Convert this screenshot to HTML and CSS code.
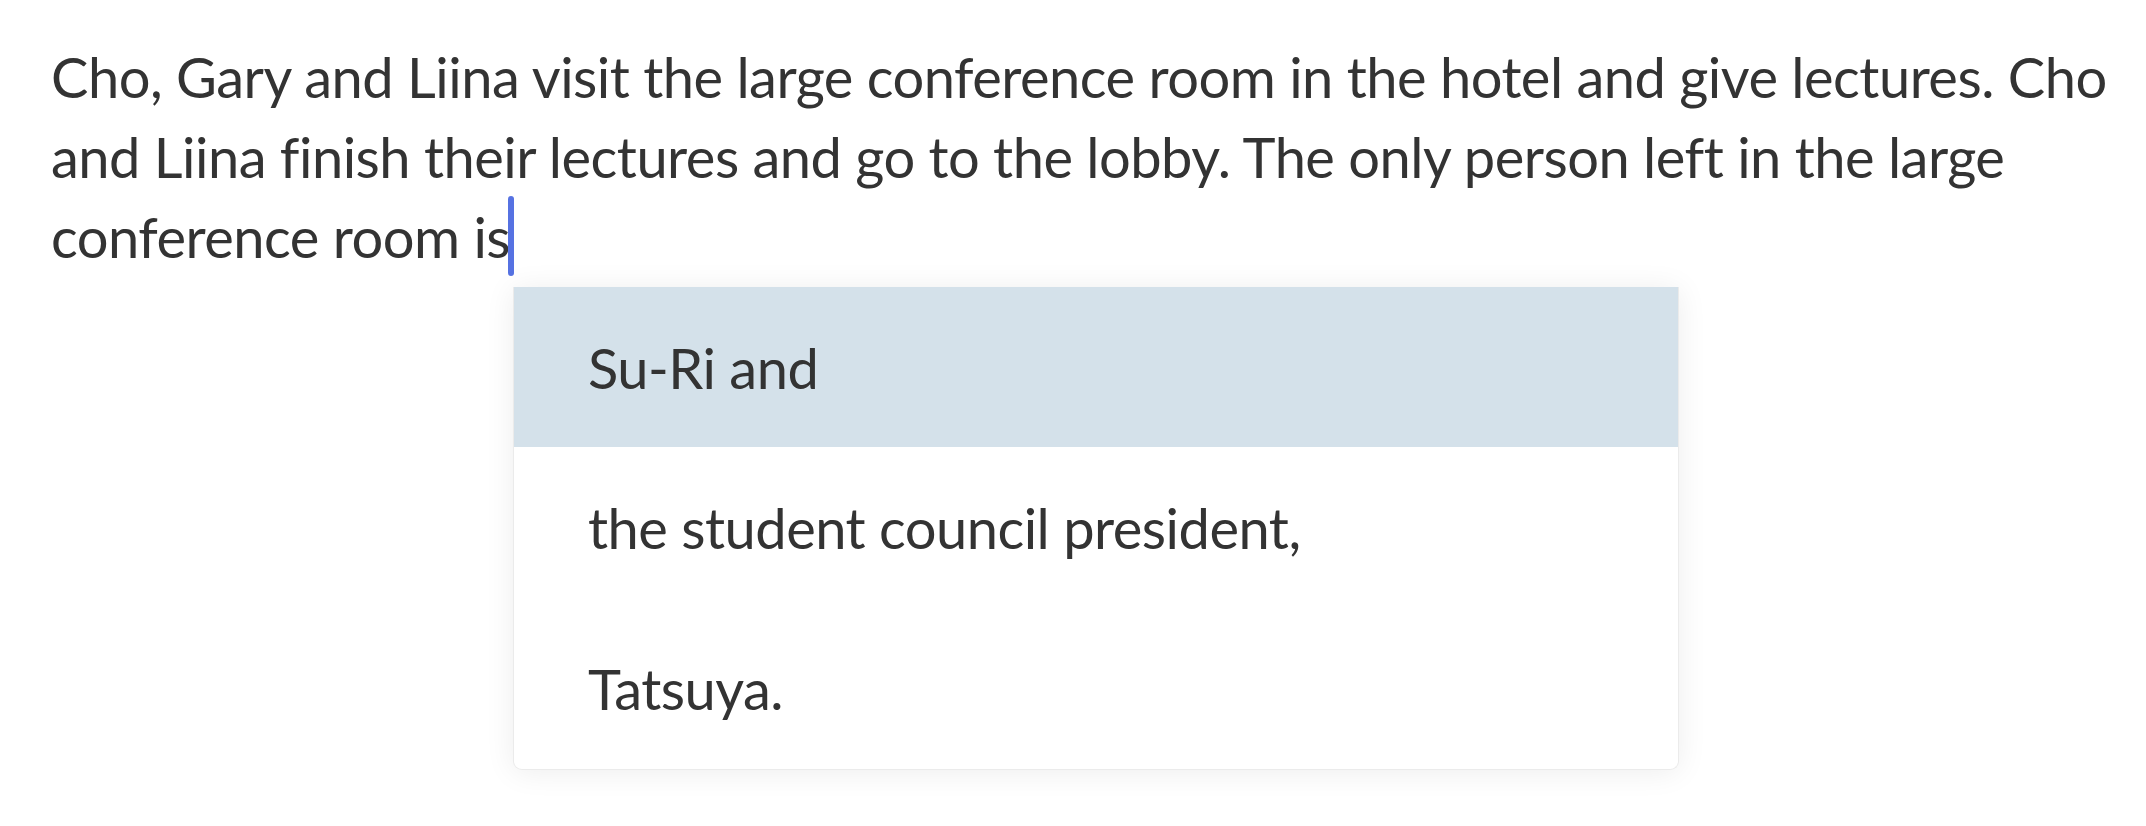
FILE: index.html
```html
<!DOCTYPE html>
<html lang="en">
<head>
<meta charset="utf-8">
<title>Autocomplete</title>
<link rel="stylesheet" href="styles.css">
</head>
<body>
<div class="page">
  <p class="text">Cho, Gary and Liina visit the large conference room in the hotel and give lectures. Cho<br>and Liina finish their lectures and go to the lobby. The only person left in the large<br>conference room is<span class="caret"></span></p>
  <ul class="menu">
    <li class="item active">Su-Ri and</li>
    <li class="item">the student council president,</li>
    <li class="item">Tatsuya.</li>
  </ul>
</div>
</body>
</html>
```
FILE: styles.css
```css
html, body {
  margin: 0;
  padding: 0;
  background: #ffffff;
}
.page {
  position: relative;
  padding: 37px 0 0 51px;
  height: 789px;
  font-family: "Lato", "Open Sans", sans-serif;
  color: #333333;
}
.text {
  margin: 0;
  font-size: 56px;
  line-height: 80px;
  letter-spacing: -0.5px;
  white-space: nowrap;
}
.caret {
  display: inline-block;
  width: 6px;
  height: 80px;
  margin-left: -2px;
  margin-top: -1px;
  background: #5672e2;
  vertical-align: top;
  border-radius: 3px;
}
.menu {
  position: absolute;
  left: 513px;
  top: 287px;
  width: 1164px;
  margin: 0;
  padding: 0;
  list-style: none;
  background: #ffffff;
  border: 1px solid #ebebeb;
  border-top: none;
  border-radius: 0 0 9px 9px;
  box-shadow: 0 2px 30px rgba(0, 0, 0, 0.075);
  overflow: hidden;
}
.item {
  height: 160px;
  display: flex;
  align-items: center;
  padding-left: 74px;
  font-size: 56px;
  letter-spacing: -0.5px;
  white-space: nowrap;
}
.item:last-child {
  height: 162px;
}
.item.active {
  background: #d4e1ea;
}
```
